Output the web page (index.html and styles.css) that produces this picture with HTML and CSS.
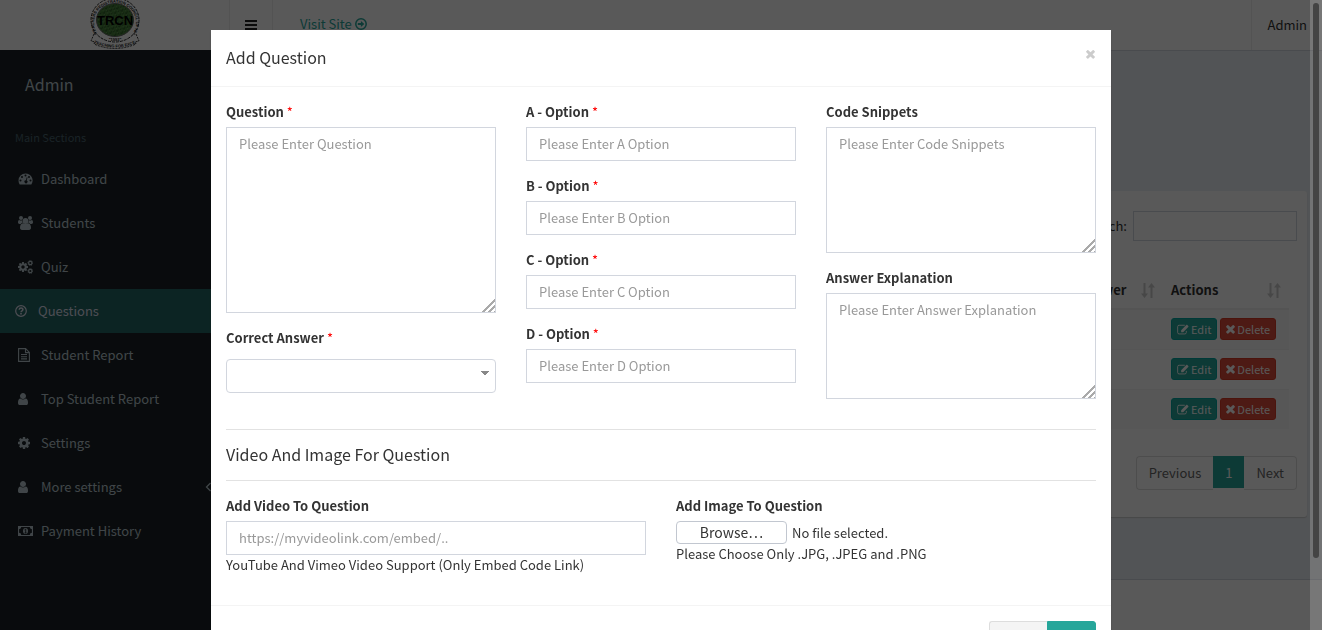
FILE: index.html
```html
<!DOCTYPE html>
<html lang="en">
<head>
<meta charset="utf-8">
<title>Add Question</title>
<link rel="stylesheet" href="styles.css">
</head>
<body>
<svg class="sprite" aria-hidden="true">
  <symbol id="user" viewBox="256 128 1280 1536"><path d="M1536 1399q0 109-62.5 187t-150.5 78h-854q-88 0-150.5-78t-62.5-187q0-85 8.5-160.5t31.5-152 58.5-131 94-89 134.5-34.5q131 128 313 128t313-128q76 0 134.5 34.5t94 89 58.5 131 31.5 152 8.5 160.5zm-256-887q0 159-112.5 271.500t-271.500 112.500-271.500-112.500-112.500-271.500 112.500-271.500 271.500-112.500 271.500 112.500 112.500 271.500z"/></symbol>
  <symbol id="cog" viewBox="128 128 1536 1536"><path d="M1152 896q0-106-75-181t-181-75-181 75-75 181 75 181 181 75 181-75 75-181zm512-109v222q0 12-8 23t-20 13l-185 28q-19 54-39 91 35 50 107 138 10 12 10 25t-9 23q-27 37-99 108t-94 71q-12 0-26-9l-138-108q-44 23-91 38-16 136-29 186-7 28-36 28h-222q-14 0-24.5-8.5t-11.5-21.5l-28-184q-49-16-90-37l-141 107q-10 9-25 9-14 0-25-11-126-114-165-168-7-10-7-23 0-12 8-23 15-21 51-66.5t54-70.5q-27-50-41-99l-183-27q-13-2-21-12.5t-8-23.5v-222q0-12 8-23t19-13l186-28q14-46 39-92-40-57-107-138-10-12-10-24 0-10 9-23 26-36 98.5-107.5t94.5-71.5q13 0 26 10l138 107q44-23 91-38 16-136 29-186 7-28 36-28h222q14 0 24.5 8.5t11.5 21.5l28 184q49 16 90 37l142-107q9-9 24-9 13 0 25 10 129 119 165 170 7 8 7 22 0 12-8 23-15 21-51 66.5t-54 70.5q26 50 41 98l183 28q13 2 21 12.5t8 23.5z"/></symbol>
  <symbol id="cogs" viewBox="0 0 15 14"><use href="#cog" x="0" y="2" width="10" height="10"/><g fill="none" stroke="currentColor"><circle cx="12.3" cy="3" r="1.7" stroke-width="1.2"/><circle cx="12.3" cy="11" r="1.7" stroke-width="1.2"/><circle cx="12.3" cy="3" r="2.5" stroke-width=".8" stroke-dasharray="1 .96"/><circle cx="12.3" cy="11" r="2.5" stroke-width=".8" stroke-dasharray="1 .96"/></g></symbol>
  <symbol id="dashboard" viewBox="0 0 14 14"><path fill-rule="evenodd" d="M7 1.500a7 7 0 0 0-7 7c0 1.400.4 2.600 1 3.700.2.200.4.300.6.300h10.800c.2 0 .5-.1.600-.3a7 7 0 0 0-6-10.700zM2 7.500a1 1 0 1 1 0 2 1 1 0 0 1 0-2zm1.500-3.500a1 1 0 1 1 0 2 1 1 0 0 1 0-2zM7 2.500a1 1 0 1 1 0 2 1 1 0 0 1 0-2zm3.500 1.500a1 1 0 1 1 0 2 1 1 0 0 1 0-2zM12 7.500a1 1 0 1 1 0 2 1 1 0 0 1 0-2zM8.300 5.200l.7.200-.8 3.100a1.500 1.500 0 1 1-.8-.2z"/></symbol>
  <symbol id="users" viewBox="0 0 15 14"><circle cx="7.500" cy="5" r="2.900"/><path d="M5.400 7.300c1.300 1 2.900 1 4.200 0 2.400 0 3.400 2 3.400 4.500 0 1.300-.8 2.200-2 2.200H4c-1.200 0-2-.9-2-2.200 0-2.500 1-4.500 3.400-4.500z"/><circle cx="3" cy="2" r="2"/><circle cx="12" cy="2" r="2"/><path d="M1.200 4c1.200.7 2 .7 3 .2 0 1 .1 1.900.7 2.600-1 0-1.600.4-2.200 1.200H1.500C.6 8 0 7.500 0 6.600 0 5.500.2 4 1.200 4zM13.800 4c-1.200.7-2 .7-3 .2 0 1-.1 1.900-.7 2.600 1 0 1.600.4 2.200 1.200h1.200c.9 0 1.500-.5 1.500-1.400 0-1.100-.2-2.600-1.200-2.600z"/></symbol>
  <symbol id="question" viewBox="0 0 12 12"><circle cx="6" cy="6" r="5.300" fill="none" stroke="currentColor" stroke-width="1.200"/><path d="M4.200 4.700C4.300 2.500 7.900 2.500 7.900 4.600 7.900 5.900 6 5.700 6 7.300" fill="none" stroke="currentColor" stroke-width="1.500"/><path d="M5.200 8h1.600v1.500H5.200z"/></symbol>
  <symbol id="file" viewBox="0 0 12 14"><path d="M.6.600h7l3.800 3.800v9H.6zM7.500.600v4h4M3 6.500h6M3 8.700h6M3 10.900h6" fill="none" stroke="currentColor" stroke-width="1.100"/></symbol>
  <symbol id="money" viewBox="0 0 15 12"><path fill-rule="evenodd" d="M0 1h15v10H0zM3.200 2.100A2.200 2.200 0 0 1 1.100 4.200v3.600a2.200 2.200 0 0 1 2.100 2.100h8.600a2.200 2.200 0 0 1 2.100-2.100V4.200a2.200 2.200 0 0 1-2.100-2.100z"/><ellipse cx="7.500" cy="6" rx="2.500" ry="3.100"/><path d="M6.500 4.900l1.200-.8V8M6.500 8h2" stroke="#1a2226" fill="none" stroke-width=".9"/></symbol>
  <symbol id="chevron" viewBox="0 0 7 10"><path d="M5.500 1L1.500 5l4 4" fill="none" stroke="currentColor" stroke-width="1.300"/></symbol>
  <symbol id="arrow-circle" viewBox="0 0 12 12"><circle cx="6" cy="6" r="5.200" fill="none" stroke="currentColor" stroke-width="1.500"/><path d="M2.800 5.100h3.100V3l3.400 3-3.400 3V6.900H2.800z"/></symbol>
  <symbol id="edit" viewBox="0 0 13 11"><path d="M8.500.9H2.300A1.600 1.600 0 0 0 .7 2.500v6.200a1.600 1.600 0 0 0 1.600 1.600h6.200a1.600 1.600 0 0 0 1.600-1.600V7" fill="none" stroke="currentColor" stroke-width="1"/><path d="M4.500 6.200L10 .7c.4-.4.800-.4 1.200 0l1 1c.4.400.4.800 0 1.200L6.700 8.400H4.500z"/></symbol>
  <symbol id="times" viewBox="290 380 1210 1190"><path d="M1490 1322q0 40-28 68l-136 136q-28 28-68 28t-68-28l-294-294-294 294q-28 28-68 28t-68-28l-136-136q-28-28-28-68t28-68l294-294-294-294q-28-28-28-68t28-68l136-136q28-28 68-28t68 28l294 294 294-294q28-28 68-28t68 28l136 136q28 28 28 68t-28 68l-294 294 294 294q28 28 28 68z"/></symbol>
  <symbol id="sort" viewBox="0 0 14 15"><path d="M2.500 0h2v10.500H7L3.500 15 0 10.500h2.500zM9.500 15h2V4.500H14L10.500 0 7 4.500h2.500z"/></symbol>
</svg>

<header class="topbar">
  <a class="brand" href="#" aria-label="TRCN">
    <svg class="logo" viewBox="0 0 50 50">
      <defs>
        <path id="ring" d="M7 33A21 20 0 1 1 43 33"/>
        <path id="ribbon" d="M4 43Q25 52 46 43"/>
        <pattern id="grass" width="5" height="5" patternUnits="userSpaceOnUse" patternTransform="rotate(27)"><path fill="#46803a" d="M0 0h5v5H0z"/><path fill="#305e2a" d="M0 1h1v2H0zM2 0h2v1H2zM3 3h1v2H3z"/><path fill="#679456" d="M1 3h1v1H1zM4 1h1v1H4z"/></pattern>
      </defs>
      <path d="M4 34L1 41l4 1-1 2q21 9 42 0l-1-2 4-1-3-7z" fill="#fff" stroke="#333" stroke-dasharray="2 1"/>
      <ellipse cx="25" cy="20" rx="24" ry="22" fill="#fff" stroke="#222" stroke-dasharray="3 1"/>
      <ellipse cx="25" cy="20" rx="18.500" ry="16.500" fill="url(#grass)" stroke="#666"/>
      <text class="logo-ring"><textPath href="#ring">TEACHERS REGISTRATION COUNCIL OF NIGERIA</textPath></text>
      <text class="logo-name" x="25" y="25" text-anchor="middle">TRCN</text>
      <text class="logo-ring" x="25" y="41" text-anchor="middle">"1993"</text>
      <text class="logo-ring"><textPath href="#ribbon">TEACHING FOR EXCELLENCE</textPath></text>
    </svg>
  </a>
  <button class="toggle" aria-label="Toggle navigation"><span></span><span></span><span></span></button>
  <a class="visit" href="#">Visit Site <svg><use href="#arrow-circle"/></svg></a>
  <a class="account" href="#">Admin</a>
</header>

<div class="layout">
  <aside class="sidebar">
    <p class="profile">Admin</p>
    <p class="section">Main Sections</p>
    <nav>
      <a href="#"><svg class="icon"><use href="#dashboard"/></svg>Dashboard</a>
      <a href="#"><svg class="icon"><use href="#users"/></svg>Students</a>
      <a href="#"><svg class="icon"><use href="#cogs"/></svg>Quiz</a>
      <a href="#" class="active"><svg class="icon"><use href="#question"/></svg>Questions</a>
      <a href="#"><svg class="icon small"><use href="#file"/></svg>Student Report</a>
      <a href="#"><svg class="icon person"><use href="#user"/></svg>Top Student Report</a>
      <a href="#"><svg class="icon small"><use href="#cog"/></svg>Settings</a>
      <a href="#"><svg class="icon person"><use href="#user"/></svg>More settings<svg class="chevron"><use href="#chevron"/></svg></a>
      <a href="#"><svg class="icon"><use href="#money"/></svg>Payment History</a>
    </nav>
  </aside>
  <div class="page">
    <main class="content">
      <section class="box">
        <div class="search"><label for="search">Search:</label><input id="search" type="search"></div>
        <table class="table">
          <thead><tr><th></th><th class="answer"><div>Answer<svg><use href="#sort"/></svg></div></th><th class="actions"><div>Actions<svg><use href="#sort"/></svg></div></th></tr></thead>
          <tbody>
            <tr><td></td><td></td><td><div class="row-buttons"><button class="edit"><svg><use href="#edit"/></svg>Edit</button><button class="delete"><svg><use href="#times"/></svg>Delete</button></div></td></tr>
            <tr><td></td><td></td><td><div class="row-buttons"><button class="edit"><svg><use href="#edit"/></svg>Edit</button><button class="delete"><svg><use href="#times"/></svg>Delete</button></div></td></tr>
            <tr><td></td><td></td><td><div class="row-buttons"><button class="edit"><svg><use href="#edit"/></svg>Edit</button><button class="delete"><svg><use href="#times"/></svg>Delete</button></div></td></tr>
          </tbody>
        </table>
        <div class="pagination"><a href="#">Previous</a><a href="#" class="current">1</a><a href="#">Next</a></div>
      </section>
    </main>
    <footer class="footer"></footer>
  </div>
</div>

<div class="overlay">
  <form class="modal" role="dialog" aria-labelledby="modal-title">
    <div class="modal-header">
      <h1 class="title" id="modal-title">Add Question</h1>
      <button type="button" class="close" aria-label="Close"><svg><use href="#times"/></svg></button>
    </div>
    <div class="modal-body">
      <div class="thirds">
        <div class="column">
          <div class="field"><label for="q">Question <span class="required">*</span></label><textarea id="q" class="tall" placeholder="Please Enter Question"></textarea></div>
          <div class="field answer-field"><label for="correct">Correct Answer <span class="required">*</span></label><select id="correct"><option></option><option>A</option><option>B</option><option>C</option><option>D</option></select></div>
        </div>
        <div class="column">
          <div class="field"><label for="a">A - Option <span class="required">*</span></label><input id="a" type="text" placeholder="Please Enter A Option"></div>
          <div class="field"><label for="b">B - Option <span class="required">*</span></label><input id="b" type="text" placeholder="Please Enter B Option"></div>
          <div class="field"><label for="c">C - Option <span class="required">*</span></label><input id="c" type="text" placeholder="Please Enter C Option"></div>
          <div class="field"><label for="d">D - Option <span class="required">*</span></label><input id="d" type="text" placeholder="Please Enter D Option"></div>
        </div>
        <div class="column">
          <div class="field"><label for="code">Code Snippets</label><textarea id="code" class="medium" placeholder="Please Enter Code Snippets"></textarea></div>
          <div class="field"><label for="explain">Answer Explanation</label><textarea id="explain" class="short" placeholder="Please Enter Answer Explanation"></textarea></div>
        </div>
      </div>
      <h2 class="title media-title">Video And Image For Question</h2>
      <div class="halves">
        <div class="field"><label for="video">Add Video To Question</label><input id="video" type="text" placeholder="https://myvideolink.com/embed/.."><p>YouTube And Vimeo Video Support (Only Embed Code Link)</p></div>
        <div class="field"><label for="image">Add Image To Question</label><div class="file"><span class="browse">Browse…</span><span>No file selected.</span><input id="image" type="file"></div><p>Please Choose Only .JPG, .JPEG and .PNG</p></div>
      </div>
    </div>
    <div class="modal-footer"><button type="reset" class="reset" aria-label="Reset"></button><button type="submit" class="submit" aria-label="Add"></button></div>
  </form>
</div>
<div class="scrollbar"><div class="thumb"></div></div>
</body>
</html>
```

FILE: styles.css
```css
* { box-sizing: border-box; }
html, body { height: 100%; }
body {
  margin: 0;
  overflow: hidden;
  display: flex;
  flex-direction: column;
  background: #ecf0f5;
  color: #333;
  font: 13px/20px "Noto Sans CJK SC", "Open Sans", sans-serif;
}
p, h1, h2 { margin: 0; font-weight: 400; }
a { color: inherit; text-decoration: none; }
svg { fill: currentColor; }
button, input, textarea, select { font: inherit; color: inherit; }
.sprite { position: absolute; width: 0; height: 0; }

/* Top bar */
.topbar { display: flex; flex: none; height: 50px; background: #fff; color: #333; }
.brand { display: flex; justify-content: center; width: 230px; border-right: 1px solid #eee; }
.logo { width: 50px; height: 50px; }
.logo-name { font: 900 13px "Liberation Sans", sans-serif; fill: #000; }
.logo-ring { font: bold 4px "Liberation Sans", sans-serif; fill: #111; }
.toggle {
  display: flex; flex-direction: column; align-items: center; justify-content: center; gap: 2px;
  width: 43px; padding: 0; border: 0; border-right: 1px solid #eee; background: none;
}
.toggle span { width: 12px; height: 2px; background: #222; }
.visit { display: flex; align-items: center; gap: 3px; padding: 0 27px 2px; color: #26a69a; }
.visit svg { width: 12px; height: 12px; }
.account { display: flex; align-items: center; margin-left: auto; padding: 0 15px; border-left: 1px solid #eee; }

/* Sidebar */
.layout { display: flex; flex: 1; }
.sidebar { width: 230px; flex: none; background: #1a2226; color: #b8c7ce; }
.profile { padding: 23px 25px 0; font-size: 16px; line-height: 22px; }
.section { padding: 32px 15px 10px; color: #4b646f; font-size: 11px; }
.sidebar nav a { display: flex; align-items: center; height: 44px; padding: 0 18px; }
.icon { width: 15px; height: 14px; margin-right: 8px; }
.icon.small { width: 12px; margin-right: 11px; }
.icon.person { width: 10px; margin-right: 13px; }
.sidebar nav .active { padding-left: 15px; background: #246864; color: #dde; }
.active .icon { width: 12px; margin-right: 11px; }
.chevron { width: 7px; height: 10px; margin-left: auto; }

/* Page behind the dialog */
.page { display: flex; flex: 1; flex-direction: column; border-top: 1px solid #d2d6de; }
.content { flex: 1; padding: 140px 15px 0; }
.box { padding: 20px 10px 27px; background: #fff; border-radius: 3px; box-shadow: 0 1px 1px #ccc; }
.search { display: flex; justify-content: flex-end; align-items: center; gap: 6px; }
.search input { width: 164px; height: 30px; border: 1px solid #d2d6de; background: #fff; }
.table { width: calc(100% - 8px); margin: 31px 0 0; border-collapse: collapse; }
.table th { padding: 8px; border-bottom: 2px solid #f0f0f0; text-align: left; }
.table th div { display: flex; justify-content: space-between; align-items: center; }
.table th svg { width: 14px; height: 15px; color: #ccc; }
.table td { height: 40px; padding: 8px; border-bottom: 1px solid #f4f4f4; }
.table tbody tr:nth-child(odd) { background: #f9f9f9; }
.table tr:last-child td { border-bottom: 0; }
.answer { width: 92px; }
.actions { width: 126px; }
.row-buttons { display: flex; gap: 3px; }
.row-buttons button {
  display: flex; align-items: center; gap: 2px; height: 22px; padding: 0 5px;
  border: 1px solid #00a6a0; border-radius: 3px; background: #26a69a; color: #fff;
  font-size: 11px; line-height: 18px;
}
.row-buttons .delete { border-color: #d73925; background: #dd4b39; }
.edit svg { width: 12px; height: 11px; }
.delete svg { width: 9px; height: 9px; }
.pagination { display: flex; justify-content: flex-end; margin-top: 27px; color: #666; }
.pagination a { height: 34px; padding: 6px 12px; border: 1px solid #ddd; }
.pagination a:first-child { border-right: 0; border-radius: 4px 0 0 4px; }
.pagination a:last-child { border-left: 0; border-radius: 0 4px 4px 0; }
.pagination .current { height: 32px; padding: 6px 11px; border-color: #26a69a; background: #26a69a; color: #fff; }
.footer { height: 51px; border-top: 1px solid #d2d6de; background: #fff; }

/* Dialog */
.overlay { position: fixed; inset: 0; overflow: hidden; padding: 30px 10px; background: rgba(0, 0, 0, .65); }
.modal { max-width: 900px; margin: 0 auto; background: #fff; box-shadow: 0 2px 3px rgba(0, 0, 0, .13); }
.modal-header { display: flex; justify-content: space-between; padding: 16px 15px 18px; border-bottom: 1px solid #f4f4f4; }
.title { font-size: 16px; line-height: 22px; }
.close { align-self: flex-start; display: flex; padding: 4px 1px; border: 0; background: none; color: #ccc; }
.close svg { width: 9px; height: 9px; }
.modal-body { padding: 15px 15px 30px; }
.thirds, .halves { display: grid; gap: 30px; }
.thirds { grid-template-columns: repeat(3, 1fr); }
.halves { grid-template-columns: repeat(2, 1fr); }
.column { display: flex; flex-direction: column; gap: 15px; }
.field { display: flex; flex-direction: column; }
.field label { margin-bottom: 5px; font-weight: 700; }
.answer-field label { margin-bottom: 11px; }
.required { color: #f00; font-weight: 400; }
.field textarea, .field select, .field > input {
  width: 100%; height: 34px; padding: 6px 12px; border: 1px solid #d2d6de; border-radius: 0; background: #fff; outline: 0;
}
.field > input { padding: 5px 12px 7px; }
.field textarea {
  resize: none;
  background:
    linear-gradient(135deg, #fff 50%, transparent 50%) right bottom / 15px 15px no-repeat,
    repeating-linear-gradient(135deg, #aaa 0 2px, #fff 2px 4px) right bottom / 15px 15px no-repeat,
    #fff;
}
.field .tall { height: 186px; }
.field .medium { height: 126px; }
.field .short { height: 106px; }
::placeholder { color: #999; opacity: 1; }
.field select {
  appearance: none; border-radius: 4px;
  background: linear-gradient(to bottom left, #888 50%, transparent 50%) right 10px top 11px / 4px 5px no-repeat, linear-gradient(to bottom right, #888 50%, transparent 50%) right 6px top 11px / 4px 5px no-repeat, #fff;
}
.media-title { margin: 30px 0 15px; padding: 13px 0 15px; border: solid #e2e2e2; border-width: 1px 0; }
.file { position: relative; display: flex; align-items: flex-start; gap: 5px; height: 23px; }
.browse { width: 111px; height: 23px; border: 1px solid #c2c7d0; border-radius: 4px; font-size: 14px; line-height: 21px; text-align: center; }
.file span + span { line-height: 23px; }
.file input { position: absolute; inset: 0; width: 100%; opacity: 0; }
.modal-footer { display: flex; justify-content: flex-end; padding: 15px; border-top: 1px solid #f4f4f4; }
.modal-footer button { height: 34px; padding: 6px 12px; border: 1px solid #ddd; background: #f4f4f4; border-radius: 3px 0 0 3px; }
.modal-footer .reset { width: 58px; border-right: 0; }
.modal-footer .submit { width: 49px; border-color: #26a69a; border-radius: 0 3px 3px 0; background: #26a69a; }

/* Scroll indicator */
.scrollbar { position: fixed; inset: 0 0 0 auto; width: 12px; padding: 3px; background: rgba(255, 255, 255, .18); }
.thumb { width: 6px; height: 89%; border-radius: 3px; background: #444; }
```
